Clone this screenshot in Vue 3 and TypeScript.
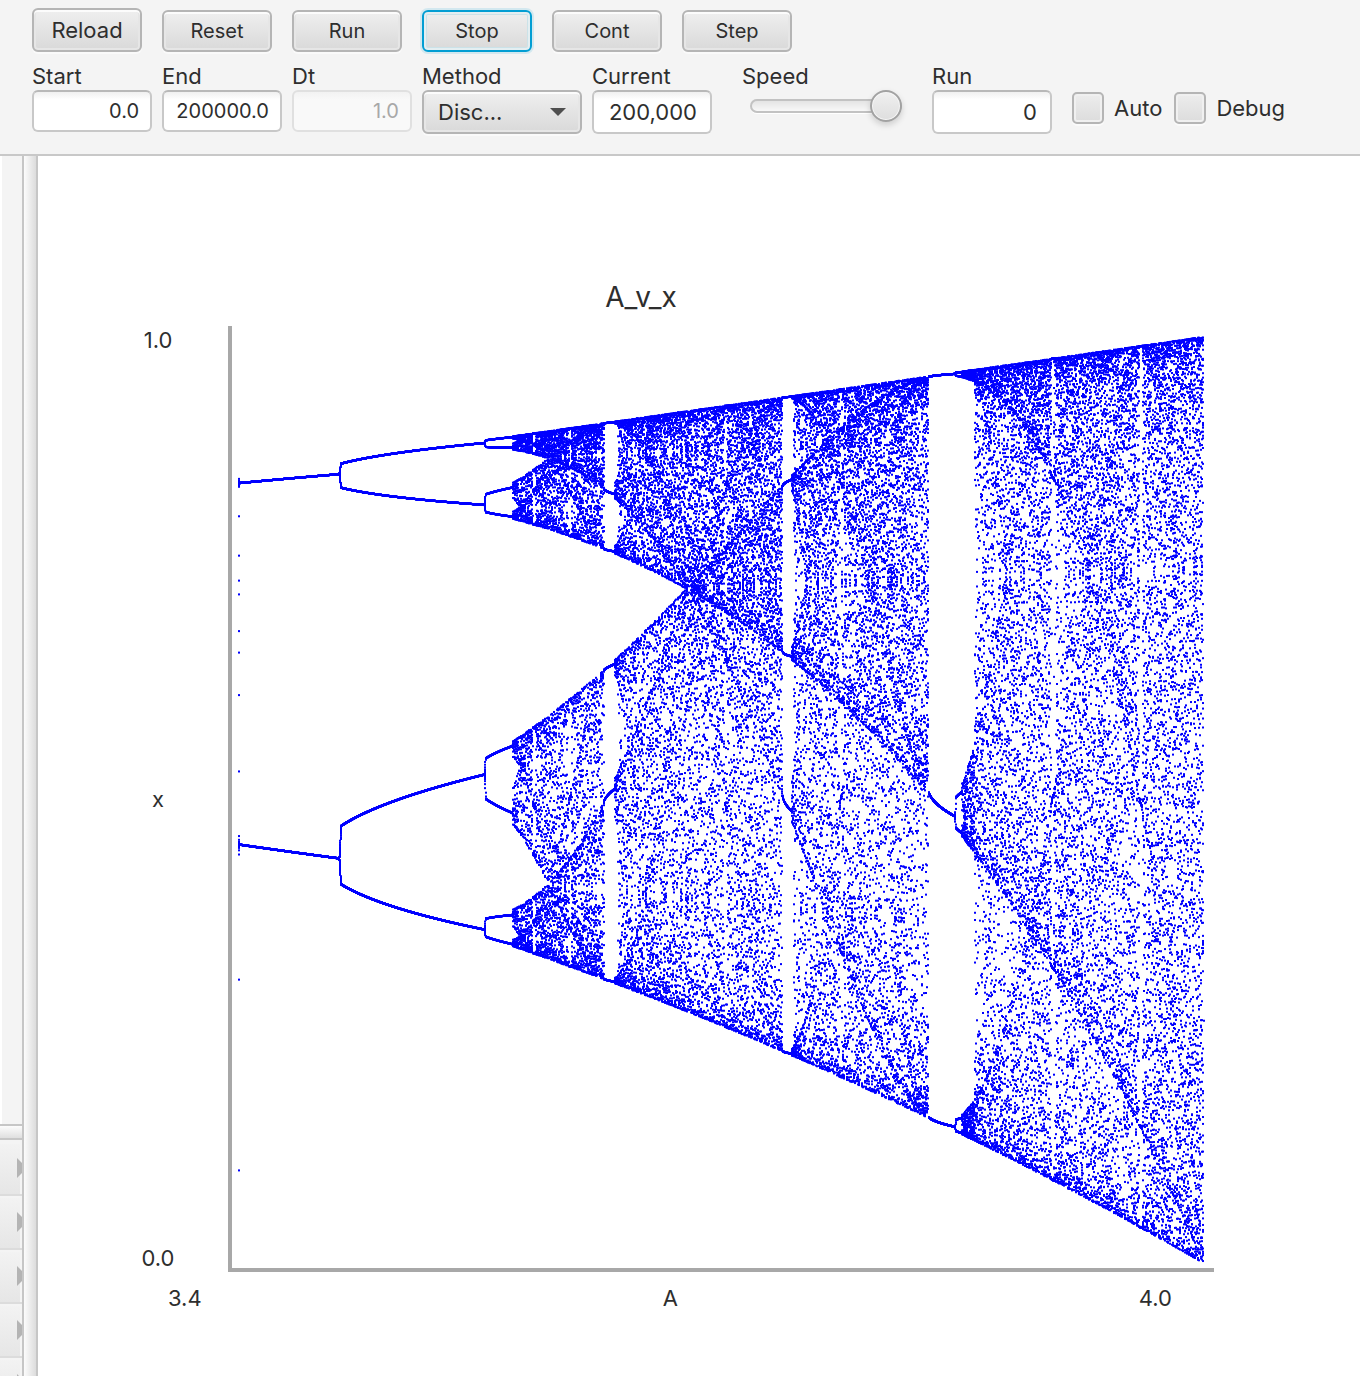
<script setup lang="ts">
import { onBeforeUnmount, onMounted, ref } from 'vue'

const actions = ['Reload', 'Reset', 'Run', 'Stop', 'Cont', 'Step']
const start = ref('0.0')
const end = ref('200000.0')
const dt = ref('1.0')
const method = ref('discrete')
const current = ref('200,000')
const speed = ref(100)
const runs = ref('0')
const auto = ref(false)
const debug = ref(false)
const panels = ['Parameters', 'Variables', 'Outputs', 'Plots', 'Notes']

const A_MIN = 3.4
const A_MAX = 4
const STEPS = 78000
const DOT = 2

const canvas = ref<HTMLCanvasElement | null>(null)
let observer: ResizeObserver | undefined

// Iterates x -> A x (1 - x) while A is swept slowly across its range.
function draw(): void {
  const el = canvas.value
  const ctx = el?.getContext('2d')
  if (!el || !ctx) return
  const w = el.clientWidth
  const h = el.clientHeight
  el.width = w
  el.height = h
  ctx.fillStyle = '#0000ff'
  const left = 6
  const spanX = w - 16
  const top = 10
  const spanY = h - 16
  let x = 0.1
  for (let i = 0; i <= STEPS; i++) {
    const t = i / STEPS
    ctx.fillRect(Math.floor(left + t * (spanX - 1)), top + (1 - x) * spanY, DOT, DOT)
    const a = A_MIN + (A_MAX - A_MIN) * t
    x = a * x * (1 - x)
  }
}

onMounted(() => {
  draw()
  observer = new ResizeObserver(draw)
  if (canvas.value) observer.observe(canvas.value)
})
onBeforeUnmount(() => observer?.disconnect())
</script>

<template>
  <div class="app">
    <header class="toolbar">
      <div class="actions">
        <button
          v-for="name in actions"
          :key="name"
          type="button"
          class="btn"
          :class="{ large: name === 'Reload', focused: name === 'Stop' }"
        >{{ name }}</button>
      </div>
      <div class="fields">
        <div class="field">
          <label for="start">Start</label>
          <input id="start" v-model="start" type="text" />
        </div>
        <div class="field">
          <label for="end">End</label>
          <input id="end" v-model="end" type="text" />
        </div>
        <div class="field">
          <label for="dt">Dt</label>
          <input id="dt" v-model="dt" type="text" disabled />
        </div>
        <div class="field wide">
          <label for="method">Method</label>
          <div class="select">
            <select id="method" v-model="method">
              <option value="discrete">Disc...</option>
            </select>
            <svg class="arrow" viewBox="0 0 16 9" aria-hidden="true">
              <path d="M0 0H16L8 8Z" fill="#4f4f4f" />
            </svg>
          </div>
        </div>
        <div class="field">
          <label for="current">Current</label>
          <input id="current" v-model="current" class="tall" type="text" />
        </div>
        <div class="field speed">
          <label for="speed">Speed</label>
          <input id="speed" v-model="speed" type="range" min="0" max="100" />
        </div>
        <div class="field">
          <label for="runs">Run</label>
          <input id="runs" v-model="runs" class="tall" type="text" />
        </div>
        <div class="checks">
          <label><input v-model="auto" type="checkbox" />Auto</label>
          <label><input v-model="debug" type="checkbox" />Debug</label>
        </div>
      </div>
    </header>

    <div class="body">
      <aside class="side">
        <div class="side-top"></div>
        <div class="split-h"></div>
        <div class="panels">
          <button v-for="p in panels" :key="p" type="button" class="panel" :aria-label="p">
            <svg viewBox="0 0 5 20" aria-hidden="true"><path d="M0 0L5 5V15L0 20Z" fill="#b4b4b4" /></svg>
          </button>
        </div>
      </aside>
      <div class="split-v"></div>
      <main class="chart">
        <h1>A_v_x</h1>
        <div class="plot-row">
          <div class="y-axis">
            <span>1.0</span>
            <span>x</span>
            <span>0.0</span>
          </div>
          <div class="plot"><canvas ref="canvas"></canvas></div>
        </div>
        <div class="x-axis">
          <span>3.4</span>
          <span>A</span>
          <span>4.0</span>
        </div>
      </main>
    </div>
  </div>
</template>

<style>
body {
  margin: 0;
}
</style>

<style scoped>
.app,
.app * {
  box-sizing: border-box;
}
.app {
  display: flex;
  flex-direction: column;
  height: 100vh;
  min-height: 700px;
  overflow: hidden;
  background: #fff;
  color: #2e2e2e;
  font-family: Inter, Roboto, "Liberation Sans", sans-serif;
  font-size: 22px;
}
button,
input,
select {
  font-family: inherit;
  color: inherit;
  margin: 0;
  outline: none;
}
.toolbar {
  flex: none;
  height: 156px;
  padding: 8px 32px 0;
  background: #f4f4f4;
  border-bottom: 2px solid #c8c8c8;
}
.actions {
  display: flex;
  align-items: flex-end;
  gap: 20px;
  height: 44px;
}
.btn {
  width: 110px;
  height: 42px;
  padding: 0;
  font-size: 20px;
  line-height: 24px;
  border: 2px solid #b5b5b5;
  border-radius: 6px;
  background: linear-gradient(#efefef, #d9d9d9);
  box-shadow: inset 0 2px 0 #fcfcfc, inset 0 0 0 2px #e6e6e6, 0 2px 0 #fafafa;
}
.btn.large {
  height: 44px;
  font-size: 22px;
}
.btn.focused {
  border-color: #039ed3;
  box-shadow: inset 0 0 0 2px #e4eef1, inset 0 0 0 3px #cbe2e8, 0 0 0 2px #d3e8ef;
}
.fields {
  display: flex;
  align-items: flex-start;
  gap: 10px;
  margin-top: 12px;
}
.field {
  flex: none;
  width: 120px;
}
.field.wide {
  width: 160px;
}
.field > label {
  display: block;
  height: 26px;
  line-height: 24px;
}
input[type="text"] {
  display: block;
  width: 100%;
  height: 42px;
  padding: 0 11px 0 8px;
  text-align: right;
  font-size: 20px;
  border: 2px solid #c8c8c8;
  border-top-color: #b8b8b8;
  border-radius: 6px;
  background: linear-gradient(#f0f0f0, #fff 8px);
}
input[type="text"].tall {
  height: 44px;
  padding: 0 13px;
  font-size: 22px;
}
input[type="text"]:disabled {
  color: #a8a8a8;
  border-color: #e0e0e0;
  background: linear-gradient(#f2f2f2, #f9f9f9 8px);
}
.select {
  display: grid;
}
.select > * {
  grid-area: 1 / 1;
}
select {
  width: 100%;
  height: 44px;
  padding: 0 40px 0 14px;
  font-size: 22px;
  appearance: none;
  border: 2px solid #b5b5b5;
  border-radius: 6px;
  background: linear-gradient(#efefef, #d9d9d9);
  box-shadow: inset 0 2px 0 #fcfcfc, inset 0 0 0 2px #e6e6e6, 0 2px 0 #fafafa;
}
.arrow {
  width: 16px;
  height: 9px;
  justify-self: end;
  align-self: center;
  margin-right: 16px;
  pointer-events: none;
}
.speed {
  width: 160px;
  margin: 0 20px;
}
input[type="range"] {
  display: block;
  width: 152px;
  height: 32px;
  margin-left: 8px;
  appearance: none;
  background: transparent;
}
input[type="range"]::-webkit-slider-runnable-track {
  height: 14px;
  border-radius: 7px;
  background: linear-gradient(#e0e0e0, #fcfcfc);
  box-shadow: inset 0 0 0 2px #c2c2c2, 0 1px 0 #fff;
}
input[type="range"]::-webkit-slider-thumb {
  appearance: none;
  box-sizing: border-box;
  width: 32px;
  height: 32px;
  margin-top: -9px;
  border: 2px solid #a2a2a2;
  border-radius: 50%;
  background: linear-gradient(#f0f0f0, #dedede);
  box-shadow: inset 0 0 0 1px #f6f6f6, 0 3px 6px rgba(0, 0, 0, 0.16);
}
.checks {
  display: flex;
  gap: 12px;
  margin: 28px 0 0 10px;
}
.checks label {
  display: flex;
  align-items: center;
  gap: 10px;
}
input[type="checkbox"] {
  width: 32px;
  height: 32px;
  appearance: none;
  border: 2px solid #b5b5b5;
  border-radius: 5px;
  background: linear-gradient(#ededed, #dcdcdc);
  box-shadow: inset 0 0 0 2px #f0f0f0, 0 2px 0 #fafafa;
}
.body {
  flex: 1;
  display: flex;
  min-height: 0;
}
.side {
  flex: none;
  display: flex;
  flex-direction: column;
  width: 22px;
}
.side-top {
  flex: 1;
  border-left: 2px solid #fff;
  background: #f4f4f4;
}
.split-h {
  flex: none;
  height: 16px;
  border: solid #c6c6c6;
  border-width: 2px 0;
  background: linear-gradient(#fcfcfc, #dfdfdf);
}
.panels {
  flex: none;
  height: 236px;
  padding-top: 2px;
  overflow: hidden;
  background: #f4f4f4;
}
.panel {
  display: flex;
  align-items: center;
  justify-content: flex-end;
  width: 100%;
  height: 54px;
  padding: 0;
  border: 0;
  border-bottom: 2px solid #dcdcdc;
  background: linear-gradient(#f3f3f3, #e6e6e6);
  box-shadow: inset -2px 2px 0 #f4f4f4;
}
.panel svg {
  width: 5px;
  height: 20px;
}
.split-v {
  flex: none;
  width: 16px;
  border: solid #c6c6c6;
  border-width: 0 2px;
  background: linear-gradient(90deg, #fcfcfc, #dcdcdc);
}
.chart {
  flex: 1;
  display: flex;
  flex-direction: column;
  min-width: 0;
  padding: 126px 0 64px;
}
h1 {
  margin: 0 0 14px;
  padding-right: 116px;
  font-size: 28px;
  font-weight: 400;
  line-height: 30px;
  text-align: center;
}
.plot-row {
  flex: 1;
  display: flex;
  min-height: 0;
  padding: 0 146px 0 100px;
}
.y-axis {
  flex: none;
  display: flex;
  flex-direction: column;
  justify-content: space-between;
  align-items: center;
  width: 40px;
  margin-right: 50px;
  line-height: 28px;
}
.plot {
  flex: 1;
  display: grid;
  min-width: 0;
  min-height: 0;
  border: solid #a8a8a8;
  border-width: 0 0 4px 4px;
}
.plot canvas {
  display: block;
  width: 100%;
  height: 100%;
  min-width: 0;
  min-height: 0;
}
.x-axis {
  display: flex;
  justify-content: space-between;
  margin-top: 12px;
  padding: 0 188px 0 130px;
  line-height: 28px;
}
</style>
